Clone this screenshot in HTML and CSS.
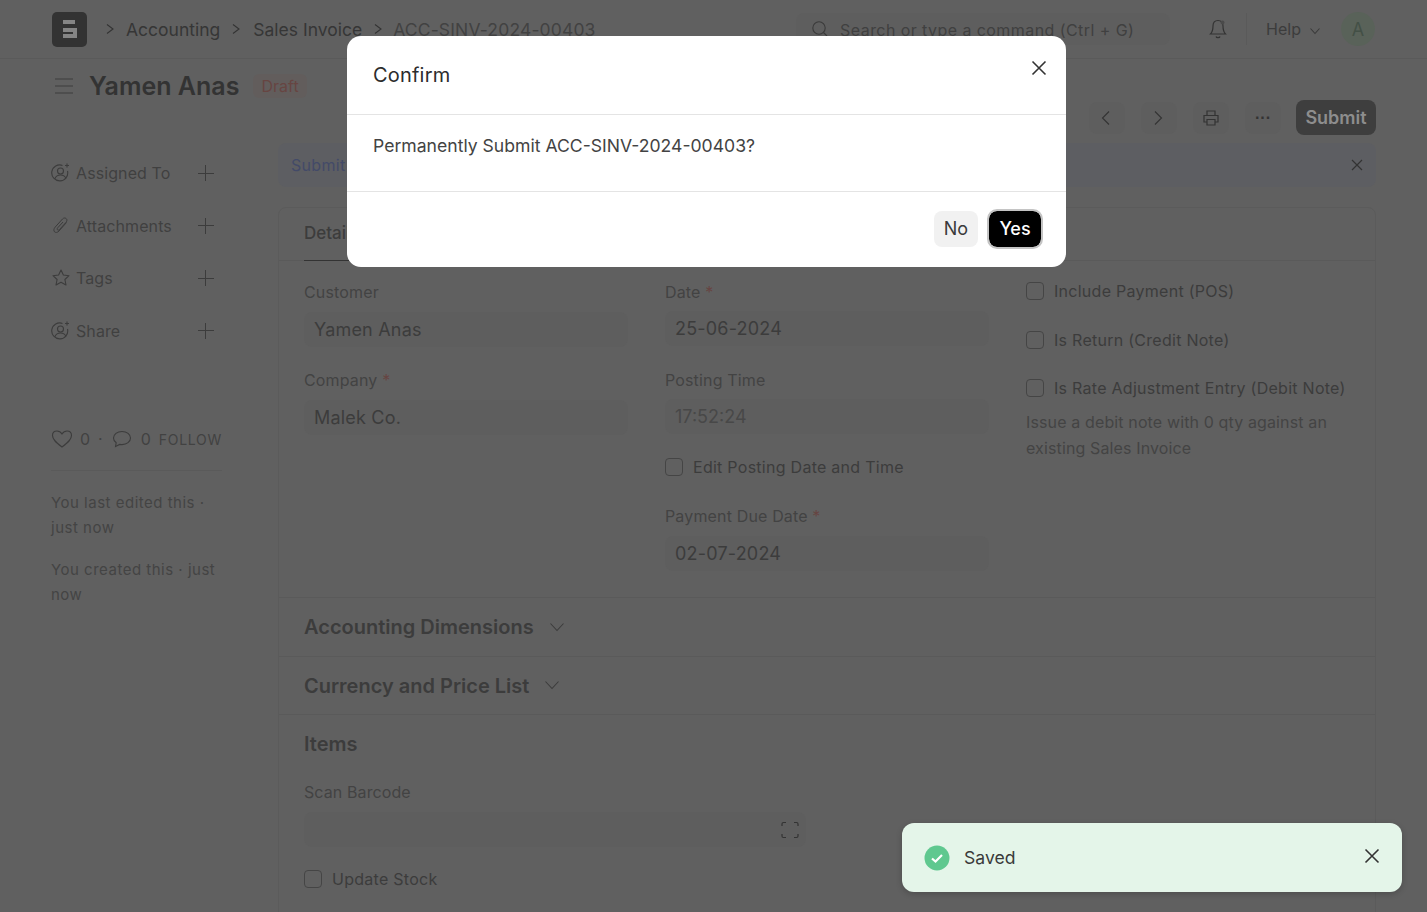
FILE: index.html
```html
<!DOCTYPE html>
<html lang="en">
<head>
    <meta charset="UTF-8">
    <meta name="viewport" content="width=device-width, initial-scale=1.0">
    <title>Yamen Anas</title>
    <link rel="stylesheet" href="styles.css">
</head>
<body>
    <header class="navbar">
        <div class="logo">
            <svg width="14" height="18" viewBox="0 0 14 18"><path d="M0 0h12v4H0zM0 8h14v10H0v-4h10v-2H0z" fill="#858585"/></svg>
        </div>
        <nav class="crumbs">
            <svg class="crumb-sep" width="10" height="12" viewBox="0 0 10 12"><path d="M2 1.500 8 6l-6 4.500" fill="none" stroke="#333" stroke-width="1.100"/></svg>
            <span>Accounting</span>
            <svg class="crumb-sep" width="10" height="12" viewBox="0 0 10 12"><path d="M2 1.500 8 6l-6 4.500" fill="none" stroke="#333" stroke-width="1.100"/></svg>
            <span>Sales Invoice</span>
            <svg class="crumb-sep" width="10" height="12" viewBox="0 0 10 12"><path d="M2 1.500 8 6l-6 4.500" fill="none" stroke="#333" stroke-width="1.100"/></svg>
            <span class="crumb-last">ACC-SINV-2024-00403</span>
        </nav>
        <div class="search">
            <svg width="18" height="18" viewBox="0 0 18 18"><circle cx="8" cy="8" r="6.200" fill="none" stroke="#3a3a3a" stroke-width="1.100"/><path d="m12.500 12.500 3.500 3.500" stroke="#3a3a3a" stroke-width="1.100"/></svg>
            <span>Search or type a command (Ctrl + G)</span>
        </div>
        <svg class="bell" width="20" height="22" viewBox="0 0 20 22"><path d="M10 2.500c-3.200 0-5 2.500-5 5.500 0 4-.6 6-2.500 8h15c-1.900-2-2.500-4-2.500-8 0-3-1.800-5.500-5-5.500zM8 18.500c.4 1.600 3.600 1.600 4 0" fill="none" stroke="#333" stroke-width="1.200"/><circle cx="14.500" cy="4.500" r="2" fill="#4a4a4a"/></svg>
        <div class="nav-divider"></div>
        <div class="help">Help
            <svg width="12" height="8" viewBox="0 0 12 8"><path d="m1.500 1.500 4.500 5 4.500-5" fill="none" stroke="#3a3a3a" stroke-width="1.100"/></svg>
        </div>
        <div class="avatar">A</div>
    </header>

    <div class="page-head">
        <svg class="menu-icon" width="20" height="18" viewBox="0 0 20 18"><path d="M1 2h18M1 9h18M1 16h18" stroke="#3c3c3c" stroke-width="1.200"/></svg>
        <h1>Yamen Anas</h1>
        <span class="badge">Draft</span>
    </div>

    <div class="actions">
        <button class="icon-btn"><svg class="chev" width="12" height="16" viewBox="0 0 12 16"><path d="M9 1.500 2.500 8 9 14.500" fill="none" stroke="#333" stroke-width="1.100"/></svg></button>
        <button class="icon-btn"><svg class="chev" width="12" height="16" viewBox="0 0 12 16"><path d="M3 1.500 9.500 8 3 14.500" fill="none" stroke="#333" stroke-width="1.100"/></svg></button>
        <button class="icon-btn"><svg width="18" height="18" viewBox="0 0 18 18"><path d="M5 6V2h8v4M5 13H2V6.500h14V13h-3M5 10.500h8V16H5z" fill="none" stroke="#333" stroke-width="1.200"/></svg></button>
        <button class="icon-btn dots">···</button>
        <button class="submit-btn">Submit</button>
    </div>

    <div class="layout">
        <aside class="sidebar">
            <div class="side-item">
                <svg width="20" height="20" viewBox="0 0 20 20"><use href="#user-plus"/></svg>
                <span>Assigned To</span><i class="plus"></i>
            </div>
            <div class="side-item">
                <svg width="20" height="20" viewBox="0 0 20 20"><path d="M15.500 6.500 8 15c-1.500 1.700-3.500 1.800-4.500.8s-.8-3 .6-4.600L11.500 3c1.100-1.200 2.700-1.300 3.700-.4s.9 2.400-.1 3.600L8.500 13.500c-.6.700-1.500.8-2 .3s-.4-1.300.2-2L12 6" fill="none" stroke="#3c3c3c" stroke-width="1"/></svg>
                <span>Attachments</span><i class="plus"></i>
            </div>
            <div class="side-item">
                <svg width="20" height="20" viewBox="0 0 20 20"><path d="m10 2 2.400 5 5.600.7-4.100 3.800 1.100 5.500-5-2.800L5 17l1.100-5.500L2 7.700 7.600 7z" fill="none" stroke="#3c3c3c" stroke-width="1.100" stroke-linejoin="round"/></svg>
                <span>Tags</span><i class="plus"></i>
            </div>
            <div class="side-item">
                <svg width="20" height="20" viewBox="0 0 20 20"><use href="#user-plus"/></svg>
                <span>Share</span><i class="plus"></i>
            </div>

            <div class="side-stats">
                <svg width="22" height="20" viewBox="0 0 22 20"><path d="M11 18C5 13.500 1.500 10.500 1.500 6.500 1.500 3.800 3.500 2 6 2c2 0 3.700 1 5 3 1.300-2 3-3 5-3 2.500 0 4.500 1.800 4.500 4.500 0 4-3.500 7-9.500 11.500z" fill="none" stroke="#3c3c3c" stroke-width="1.100"/></svg>
                <span class="stat-num">0</span>
                <span class="stat-dot">·</span>
                <svg class="stat-comment" width="20" height="18" viewBox="0 0 20 18"><path d="M10 1.500c-4.800 0-8.500 2.800-8.500 6.500 0 2 1 3.600 2.700 4.800L3.500 16.500l4.200-2.100c.7.100 1.500.2 2.300.2 4.800 0 8.500-2.900 8.500-6.600S14.800 1.500 10 1.500z" fill="none" stroke="#3c3c3c" stroke-width="1.100"/></svg>
                <span class="stat-num stat-last">0</span>
                <span class="follow">FOLLOW</span>
            </div>
            <div class="side-rule"></div>
            <p class="side-note">You last edited this · just now</p>
            <p class="side-note">You created this · just now</p>
        </aside>

        <main class="content">
            <div class="alert">
                <span>Submit this document to confirm</span>
                <svg width="12" height="12" viewBox="0 0 12 12"><path d="m1 1 10 10M11 1 1 11" stroke="#333" stroke-width="1.200"/></svg>
            </div>

            <div class="card">
                <div class="tabs"><span class="tab-active">Details</span></div>

                <div class="form-grid">
                    <div class="col col-first">
                        <div class="field">
                            <label>Customer</label>
                            <div class="input">Yamen Anas</div>
                        </div>
                        <div class="field">
                            <label>Company <em>*</em></label>
                            <div class="input">Malek Co.</div>
                        </div>
                    </div>
                    <div class="col">
                        <div class="field">
                            <label>Date <em>*</em></label>
                            <div class="input">25-06-2024</div>
                        </div>
                        <div class="field">
                            <label>Posting Time</label>
                            <div class="input input-muted">17:52:24</div>
                        </div>
                        <div class="check check-mid"><i></i>Edit Posting Date and Time</div>
                        <div class="field field-due">
                            <label>Payment Due Date <em>*</em></label>
                            <div class="input">02-07-2024</div>
                        </div>
                    </div>
                    <div class="col col-checks">
                        <div class="check"><i></i>Include Payment (POS)</div>
                        <div class="check"><i></i>Is Return (Credit Note)</div>
                        <div class="check"><i></i>Is Rate Adjustment Entry (Debit Note)</div>
                        <p class="check-help">Issue a debit note with 0 qty against an existing Sales Invoice</p>
                    </div>
                </div>

                <div class="section-row">
                    <h3>Accounting Dimensions</h3>
                    <svg width="16" height="10" viewBox="0 0 16 10"><path d="m1.500 1.500 6.500 7 6.500-7" fill="none" stroke="#3c3c3c" stroke-width="1.100"/></svg>
                </div>
                <div class="section-row">
                    <h3>Currency and Price List</h3>
                    <svg width="16" height="10" viewBox="0 0 16 10"><path d="m1.500 1.500 6.500 7 6.500-7" fill="none" stroke="#3c3c3c" stroke-width="1.100"/></svg>
                </div>

                <div class="items">
                    <h3>Items</h3>
                    <label>Scan Barcode</label>
                    <div class="input barcode">
                        <svg width="18" height="18" viewBox="0 0 18 18"><path d="M1 5V3q0-1.500 1.500-1.500H5M13 1.500h2.500Q17 1.500 17 3v2M17 13v2q0 1.500-1.500 1.500H13M5 16.500H2.500Q1 16.500 1 15v-2" fill="none" stroke="#333" stroke-width="1.200"/></svg>
                    </div>
                    <div class="check"><i></i>Update Stock</div>
                </div>
            </div>
        </main>
    </div>

    <div class="modal">
        <div class="modal-head">
            <span>Confirm</span>
            <svg width="16" height="16" viewBox="0 0 16 16"><path d="m1.500 1.500 13 13M14.500 1.500l-13 13" stroke="#333" stroke-width="1.600"/></svg>
        </div>
        <div class="modal-body">Permanently Submit ACC-SINV-2024-00403?</div>
        <div class="modal-foot">
            <button class="btn-no">No</button>
            <button class="btn-yes">Yes</button>
        </div>
    </div>

    <div class="toast">
        <svg width="26" height="26" viewBox="0 0 26 26"><circle cx="13" cy="13" r="12.500" fill="#5fc88f"/><path d="m8 13.500 3.500 3 6.500-6.500" fill="none" stroke="#fff" stroke-width="2.200"/></svg>
        <span>Saved</span>
        <svg class="toast-x" width="16" height="16" viewBox="0 0 16 16"><path d="m1.500 1.500 13 13M14.500 1.500l-13 13" stroke="#333" stroke-width="1.600"/></svg>
    </div>

    <svg width="0" height="0" class="defs">
        <symbol id="user-plus" viewBox="0 0 20 20">
            <path d="M16.500 8a8 8 0 1 1-5-5.600" fill="none" stroke="#3c3c3c" stroke-width="1.100"/>
            <circle cx="9.500" cy="8" r="3" fill="none" stroke="#3c3c3c" stroke-width="1.100"/>
            <path d="M4 15.500c1-2.500 3-3.500 5.500-3.500s4.500 1 5.500 3.500M16 .5v4M14 2.500h4" fill="none" stroke="#3c3c3c" stroke-width="1.100"/>
        </symbol>
    </svg>
</body>
</html>
```

FILE: styles.css
```css
/* the page sits behind the modal, so its colours are already dimmed */
* {
    box-sizing: border-box;
}
html, body {
    margin: 0;
    height: 912px;
    overflow: hidden;
}
body {
    position: relative;
    font-family: Inter, "Noto Sans", sans-serif;
    font-size: 16px;
    background-color: #606060;
    color: #3a3a3a;
}
.defs {
    position: absolute;
}

/* navbar */
.navbar {
    display: flex;
    align-items: center;
    height: 59px;
    padding: 0 52px;
    border-bottom: 1px solid #5a5a5a;
}
.logo {
    width: 35px;
    height: 35px;
    border-radius: 5px;
    background-color: #333;
    display: flex;
    align-items: center;
    justify-content: center;
}
.crumbs {
    display: flex;
    align-items: center;
    margin-left: 18px;
    font-size: 17.500px;
    color: #363636;
}
.crumb-sep {
    margin-right: 11px;
}
.crumbs span {
    margin-right: 11px;
}
.crumbs svg:nth-of-type(2) {
    margin-right: 12px;
}
.crumbs .crumb-last {
    color: #424242;
    margin-right: 0;
    margin-left: -1px;
    letter-spacing: .15px;
}
.search {
    display: flex;
    align-items: center;
    gap: 11px;
    width: 374px;
    height: 32px;
    margin-left: auto;
    padding-left: 15px;
    border-radius: 8px;
    background-color: #5e5e5e;
    font-size: 16px;
    letter-spacing: .43px;
    color: #404040;
}
.search span {
    margin-top: 2px;
}
.bell {
    margin-left: 38px;
}
.nav-divider {
    width: 1px;
    height: 32px;
    margin: 0 19px 0 18px;
    background-color: #5a5a5a;
}
.help {
    display: flex;
    align-items: center;
    gap: 8px;
    color: #3c3c3c;
}
.help svg {
    margin-top: 3px;
}
.avatar {
    width: 34px;
    height: 34px;
    margin-left: 20px;
    border-radius: 50%;
    background-color: #596259;
    color: #435046;
    font-size: 18px;
    text-align: center;
    line-height: 36px;
}

/* page head */
.page-head {
    display: flex;
    align-items: center;
    height: 53px;
    padding-left: 54px;
}
.menu-icon {
    margin-right: 15px;
}
.page-head h1 {
    margin: 0;
    font-size: 25px;
    font-weight: 600;
    color: #333;
}
.badge {
    margin-left: 14px;
    padding: 2px 8px;
    border-radius: 6px;
    background-color: #625d5c;
    color: #674542;
    font-size: 16px;
    letter-spacing: .05px;
}
.actions {
    display: flex;
    justify-content: flex-end;
    align-items: center;
    gap: 16px;
    height: 35px;
    margin-top: -12px;
    padding-right: 51px;
}
.icon-btn {
    width: 36px;
    height: 32px;
    border: none;
    border-radius: 8px;
    background-color: #5e5e5e;
    display: flex;
    align-items: center;
    justify-content: center;
    padding: 0;
}
.chev {
    margin-left: -2px;
}
.dots {
    font-size: 16px;
    font-weight: 700;
    color: #333;
}
.submit-btn {
    width: 80px;
    height: 35px;
    margin-left: -1px;
    border: none;
    border-radius: 8px;
    background-color: #3e3e3e;
    color: #8d8d8d;
    font-family: inherit;
    font-size: 18px;
    font-weight: 600;
}

/* main layout */
.layout {
    display: flex;
    padding: 8px 51px 0 51px;
}
.sidebar {
    width: 227px;
    flex-shrink: 0;
    padding-top: 4px;
}
.side-item {
    display: flex;
    align-items: center;
    width: 163px;
    height: 52.500px;
    color: #404040;
    letter-spacing: .1px;
}
.side-item svg {
    margin-right: 5px;
}
.plus {
    position: relative;
    width: 16px;
    height: 16px;
    margin-left: auto;
    margin-right: 0;
    background:
        linear-gradient(#3c3c3c, #3c3c3c) center / 100% 1.200px no-repeat,
        linear-gradient(#3c3c3c, #3c3c3c) center / 1.200px 100% no-repeat;
}
.side-stats {
    display: flex;
    align-items: center;
    gap: 7px;
    margin-top: 72px;
    color: #424242;
}
.stat-dot {
    margin: 0 1px;
}
.stat-comment {
    margin-left: 1px;
}
.stat-last {
    margin-left: 2px;
}
.follow {
    font-size: 14px;
    letter-spacing: .7px;
    margin-left: 1px;
}
.side-rule {
    width: 171px;
    height: 1px;
    margin: 21px 0 20px;
    background-color: #5a5a5a;
}
.side-note {
    width: 170px;
    margin: 0 0 18px;
    font-size: 15px;
    letter-spacing: .5px;
    line-height: 24.500px;
    color: #444;
}
.content {
    flex: 1;
    min-width: 0;
}
.alert {
    display: flex;
    justify-content: space-between;
    align-items: center;
    height: 44px;
    padding: 0 13px;
    border-radius: 8px;
    background-color: #5d5e62;
    color: #434a68;
    letter-spacing: .3px;
}
.card {
    margin-top: 20px;
    height: 720px;
    border: 1px solid #5b5b5b;
    border-radius: 8px;
}
.tabs {
    height: 53px;
    padding-left: 25px;
    border-bottom: 1px solid #5a5a5a;
}
.tab-active {
    display: inline-block;
    height: 53px;
    padding-top: 15px;
    width: 70px;
    border-bottom: 1px solid #333;
    font-size: 17px;
    font-weight: 500;
    color: #3c3c3c;
}
.form-grid {
    display: grid;
    grid-template-columns: repeat(3, 324px);
    column-gap: 37px;
    height: 337px;
    padding: 21px 25px 0;
    border-bottom: 1px solid #5a5a5a;
}
label {
    display: block;
    height: 20px;
    line-height: 20px;
    font-size: 16px;
    letter-spacing: .15px;
    color: #434343;
}
label em {
    font-style: normal;
    color: #674542;
}
.field {
    height: 88px;
}
.input {
    height: 35px;
    margin-top: 9px;
    padding-left: 10px;
    border-radius: 8px;
    background-color: #5e5e5e;
    font-size: 18px;
    letter-spacing: .2px;
    line-height: 35px;
    color: #3c3c3c;
}
.col-first .input {
    margin-top: 10px;
}
.input-muted {
    color: #484848;
    letter-spacing: 0;
}
.check {
    display: flex;
    align-items: center;
    height: 20px;
    font-size: 16px;
    letter-spacing: .27px;
    color: #3c3c3c;
}
.check i {
    width: 18px;
    height: 18px;
    margin-right: 10px;
    border: 1px solid #454545;
    border-radius: 4px;
}
.check-mid {
    margin-top: -1px;
}
.field-due {
    margin-top: 29px;
}
.field-due .input {
    margin-top: 10px;
}
.col-checks {
    margin-top: -1px;
}
.col-checks .check {
    margin-bottom: 28.500px;
}
.col-checks .check:nth-child(3) {
    margin-bottom: 11px;
}
.check-help {
    margin: 0;
    font-size: 16px;
    letter-spacing: .13px;
    line-height: 26px;
    color: #444;
}
.section-row {
    display: flex;
    align-items: center;
    gap: 16px;
    height: 58.500px;
    padding-left: 25px;
    border-bottom: 1px solid #5a5a5a;
}
.section-row + .section-row h3 {
    margin-top: 1px;
}
h3 {
    margin: 0;
    font-size: 20px;
    font-weight: 600;
    color: #3c3c3c;
}
.section-row svg {
    margin-left: -1px;
}
.items {
    padding: 17px 25px 0;
}
.items label {
    margin-top: 26px;
    letter-spacing: .1px;
}
.barcode {
    display: flex;
    align-items: center;
    justify-content: flex-end;
    width: 502px;
    height: 35px;
    margin-top: 10px;
    margin-bottom: 22px;
    padding-right: 7px;
}

/* modal */
.modal {
    position: absolute;
    left: 347px;
    top: 36px;
    width: 719px;
    height: 231px;
    border-radius: 14px;
    background-color: #fff;
    color: #3a3a3a;
}
.modal-head {
    display: flex;
    justify-content: space-between;
    align-items: center;
    height: 79px;
    padding: 0 19px 0 26px;
    border-bottom: 1px solid #e4e4e4;
    font-size: 20px;
    letter-spacing: .2px;
    color: #2c2c2c;
}
.modal-head svg {
    margin-top: -14px;
}
.modal-body {
    height: 77px;
    padding: 20px 26px 0;
    border-bottom: 1px solid #e4e4e4;
    font-size: 17.600px;
    line-height: 22px;
    color: #434343;
}
.modal-foot {
    display: flex;
    justify-content: flex-end;
    align-items: center;
    gap: 11px;
    height: 73px;
    padding-right: 25px;
}
.modal-foot button {
    height: 36px;
    padding: 0;
    border: none;
    border-radius: 8px;
    font-family: inherit;
    font-size: 18px;
}
.btn-no {
    width: 44px;
    background-color: #f1f1f1;
    color: #3a3a3a;
}
.btn-yes {
    width: 52px;
    background-color: #000;
    color: #fff;
    font-weight: 500;
    outline: 2px solid #c4c4c4;
}

/* toast */
.toast {
    position: absolute;
    left: 902px;
    top: 823px;
    display: flex;
    align-items: center;
    width: 500px;
    height: 69px;
    padding: 0 22px;
    border-radius: 12px;
    background-color: #e4f5e9;
    box-shadow: 0 2px 6px rgba(0, 0, 0, 0.2);
    font-size: 17.600px;
    color: #3a3a3a;
}
.toast span {
    margin-left: 14px;
}
.toast-x {
    margin-left: auto;
    margin-top: -4px;
}
```
